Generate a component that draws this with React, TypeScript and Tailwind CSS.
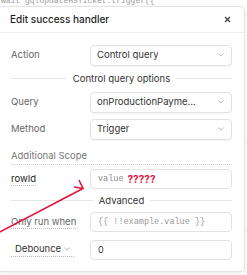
import { ReactNode } from "react";

const sans = { fontFamily: "Inter, 'Noto Sans', sans-serif" };
const mono = { fontFamily: "'Liberation Mono', 'DejaVu Sans Mono', monospace" };

const Chevron = ({ className = "" }: { className?: string }) => (
  <svg width="6" height="4" viewBox="0 0 6 4" className={className}>
    <polyline points="0.5,0.5 3,3 5.5,0.5" fill="none" stroke="#b5b5b5" strokeWidth="0.9" />
  </svg>
);

const Divider = ({ text, className = "" }: { text: string; className?: string }) => (
  <div className={`flex items-center gap-[6px] ${className}`}>
    <div className="h-px flex-1 bg-[#e6e6e6]" />
    <span className="text-[9.5px] leading-[12px] text-[#333]">{text}</span>
    <div className="h-px flex-1 bg-[#e6e6e6]" />
  </div>
);

const Row = ({ label, children, className = "" }: { label: ReactNode; children: ReactNode; className?: string }) => (
  <div className={`flex items-center ${className}`}>
    <div className="w-[79px] shrink-0 text-[9.5px] leading-[12px] text-[#666]">{label}</div>
    <div className="flex-1">{children}</div>
  </div>
);

const Select = ({ value }: { value: string }) => (
  <div className="flex h-[21px] items-center justify-between rounded-[4px] border border-[#e2e2e2] bg-white pl-[6px] pr-[7px] shadow-[0_1px_1px_rgba(0,0,0,0.04)]">
    <span className="truncate text-[9.5px] text-[#333]">{value}</span>
    <Chevron />
  </div>
);

const Field = ({ children }: { children: ReactNode }) => (
  <div className="flex h-[20px] items-center rounded-[4px] border border-[#e2e2e2] bg-white px-[7px]">
    {children}
  </div>
);

const App = () => {
  return (
    <div className="relative h-[275px] w-[247px] overflow-hidden bg-white" style={sans}>
      {/* background editor */}
      <div className="-mt-[4px] pl-[1px] text-[8px] leading-[10px] text-[#9a9a9a]" style={mono}>
        wait gqlUpdateHSTicket.trigger({"{"}
      </div>
      <div className="h-[137px] border-b border-[#ececec]" />
      <div className="h-[89px] border-b border-[#ececec]" />

      {/* popover */}
      <div className="absolute left-[-2px] top-[6px] w-[247px] rounded-[4px] border border-[#e3e3e3] bg-white shadow-[0_2px_6px_rgba(0,0,0,0.08)]">
        <div className="flex h-[26px] items-center justify-between border-b border-[#ececec] pl-[11px] pr-[13px]">
          <span className="text-[10px] font-medium text-[#1f1f1f]">Edit success handler</span>
          <svg width="7" height="7" viewBox="0 0 7 7">
            <path d="M1 1 L6 6 M6 1 L1 6" stroke="#333" strokeWidth="1.1" />
          </svg>
        </div>

        <div className="flex flex-col pb-[11px] pl-[12px] pr-[12px] pt-[11px]">
          <Row label="Action" className="h-[22px]">
            <Select value="Control query" />
          </Row>

          <Divider text="Control query options" className="h-[25px]" />

          <Row label="Query" className="h-[22px]">
            <Select value="onProductionPayme..." />
          </Row>
          <Row label="Method" className="mt-[5px] h-[22px]">
            <Select value="Trigger" />
          </Row>

          <div className="mt-[10px] border-b border-dotted border-[#cfcfcf] pb-[2px] text-[9.5px] leading-[12px] text-[#777]">
            Additional Scope
          </div>

          <Row
            label={<span className="border-b border-dotted border-[#bbb] pb-[1px] text-[#222]">rowId</span>}
            className="mt-[4px] h-[20px]"
          >
            <Field>
              <span className="text-[8.5px] text-[#8a8a8a]" style={mono}>value</span>
              <span className="ml-[4px] text-[10px] font-bold text-[#e0173f]">?????</span>
            </Field>
          </Row>

          <Divider text="Advanced" className="h-[23px]" />

          <Row
            label={<span className="border-b border-dotted border-[#bbb] pb-[1px]">Only run when</span>}
            className="h-[20px]"
          >
            <Field>
              <span className="text-[8.5px] text-[#9a9a9a]" style={mono}>{"{{ !!example.value }}"}</span>
            </Field>
          </Row>
          <Row
            label={
              <span className="inline-flex items-center gap-[3px] border-b border-dotted border-[#bbb] px-[4px] pb-[1px] text-[#333]">
                Debounce
                <Chevron />
              </span>
            }
            className="mt-[8px] h-[20px]"
          >
            <Field>
              <span className="text-[9px] text-[#333]">0</span>
            </Field>
          </Row>
        </div>
      </div>

      {/* annotation arrow */}
      <svg className="pointer-events-none absolute left-0 top-0" width="247" height="275">
        <line x1="-2" y1="233" x2="82" y2="189" stroke="#e0143c" strokeWidth="1.6" />
        <polyline points="74,187 83,188.5 79,180" fill="none" stroke="#e0143c" strokeWidth="1.6" />
      </svg>
    </div>
  );
};

export default App;
